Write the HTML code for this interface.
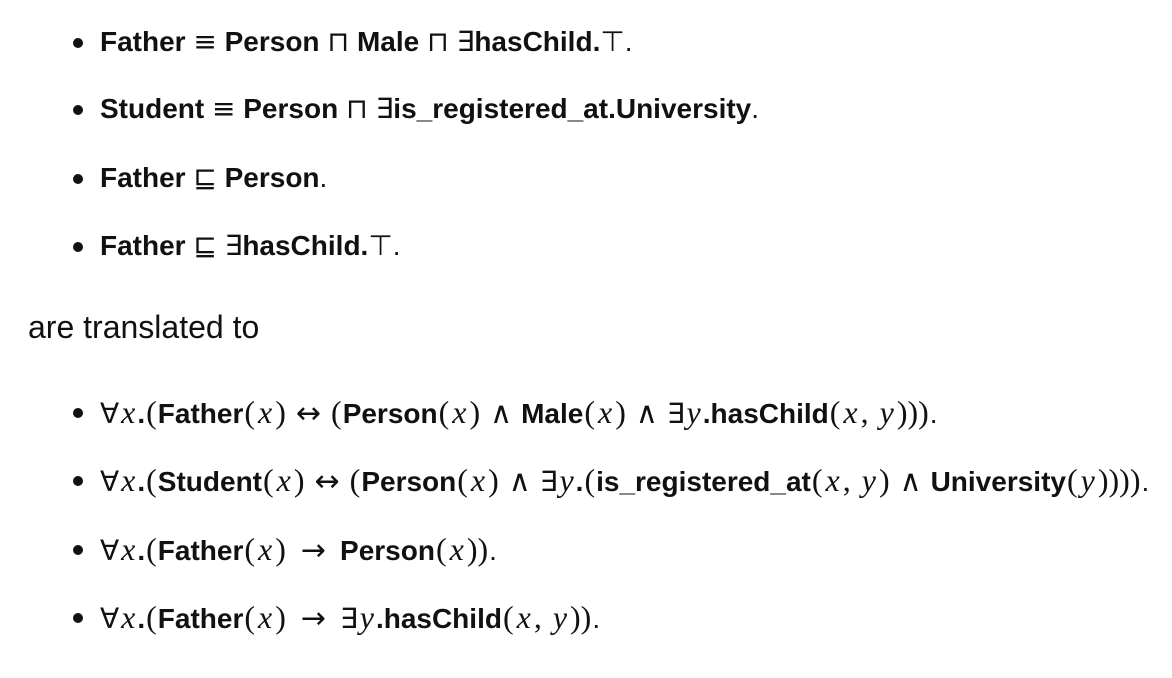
<!DOCTYPE html>
<html><head><meta charset="utf-8"><style>
html,body{margin:0;padding:0;background:#fff;}
body{width:1172px;height:678px;position:relative;overflow:hidden;font-family:"Liberation Sans","DejaVu Sans",sans-serif;color:#111;}
.l{position:absolute;left:100px;font-size:28px;line-height:28px;font-weight:bold;white-space:nowrap;}
.b{position:absolute;left:-27px;top:10px;width:10px;height:10px;border-radius:50%;background:#111;}
.o{font-weight:normal;font-family:"DejaVu Sans","Liberation Sans",sans-serif;font-size:28px;margin:0 0px;}
.r{font-weight:normal;font-family:"DejaVu Sans",sans-serif;font-size:30px;margin:0 9px;}
.m{font-family:"Liberation Serif",serif;font-style:italic;font-weight:normal;font-size:32px;margin:0 2px;}
.p{font-family:"Liberation Serif",serif;font-weight:normal;font-size:32px;margin:0 1px;}
.n{font-weight:normal;}
</style></head><body>
<div class="l" style="top:28px"><span class="b"></span>Father <span class="o">≡</span> Person <span class="o">⊓</span> Male <span class="o">⊓</span> <span class="o" style="margin:0">∃</span>hasChild.<span class="o">⊤</span><span class="n">.</span></div>
<div class="l" style="top:95px"><span class="b"></span>Student <span class="o">≡</span> Person <span class="o">⊓</span> <span class="o" style="margin:0">∃</span>is_registered_at.University<span class="n">.</span></div>
<div class="l" style="top:164px"><span class="b"></span>Father <span class="o">⊑</span> Person<span class="n">.</span></div>
<div class="l" style="top:232px"><span class="b"></span>Father <span class="o">⊑</span> <span class="o" style="margin:0">∃</span>hasChild.<span class="o">⊤</span><span class="n">.</span></div>
<div class="l n" style="top:313px;left:28px;font-weight:normal;font-size:32px">are translated to</div>
<div class="l" style="top:398px"><span class="b"></span><span class="o" style="margin:0">∀</span><span class="m">x</span>.<span class="p">(</span>Father<span class="p">(</span><span class="m">x</span><span class="p">)</span><span class="r">↔</span><span class="p">(</span>Person<span class="p">(</span><span class="m">x</span><span class="p">)</span><span class="r">∧</span>Male<span class="p">(</span><span class="m">x</span><span class="p">)</span><span class="r">∧</span><span class="o" style="margin:0">∃</span><span class="m">y</span>.hasChild<span class="p">(</span><span class="m">x</span><span class="p">, </span><span class="m">y</span><span class="p">)))</span><span class="n">.</span></div>
<div class="l" style="top:466px"><span class="b"></span><span class="o" style="margin:0">∀</span><span class="m">x</span>.<span class="p">(</span>Student<span class="p">(</span><span class="m">x</span><span class="p">)</span><span class="r">↔</span><span class="p">(</span>Person<span class="p">(</span><span class="m">x</span><span class="p">)</span><span class="r">∧</span><span class="o" style="margin:0">∃</span><span class="m">y</span>.<span class="p">(</span>is_registered_at<span class="p">(</span><span class="m">x</span><span class="p">, </span><span class="m">y</span><span class="p">)</span><span class="r">∧</span>University<span class="p">(</span><span class="m">y</span><span class="p">))))</span><span class="n">.</span></div>
<div class="l" style="top:535px"><span class="b"></span><span class="o" style="margin:0">∀</span><span class="m">x</span>.<span class="p">(</span>Father<span class="p">(</span><span class="m">x</span><span class="p">)</span><span class="r" style="margin:0 14px">→</span>Person<span class="p">(</span><span class="m">x</span><span class="p">))</span><span class="n">.</span></div>
<div class="l" style="top:603px"><span class="b"></span><span class="o" style="margin:0">∀</span><span class="m">x</span>.<span class="p">(</span>Father<span class="p">(</span><span class="m">x</span><span class="p">)</span><span class="r" style="margin:0 14px">→</span><span class="o" style="margin:0">∃</span><span class="m">y</span>.hasChild<span class="p">(</span><span class="m">x</span><span class="p">, </span><span class="m">y</span><span class="p">))</span><span class="n">.</span></div>
</body></html>
